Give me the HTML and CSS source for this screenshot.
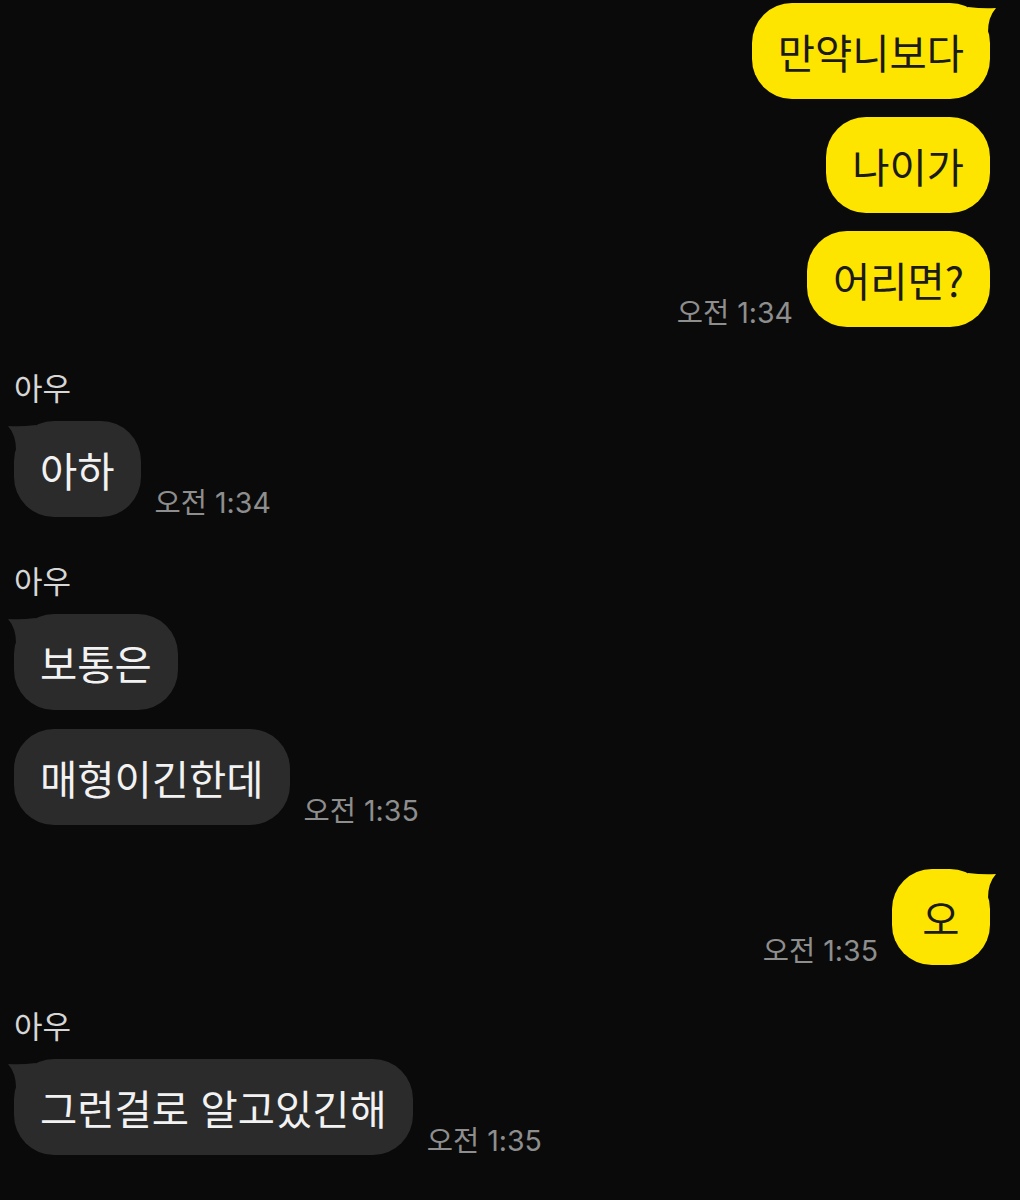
FILE: index.html
```html
<!DOCTYPE html>
<html lang="ko">
<head>
    <meta charset="UTF-8">
    <meta name="viewport" content="width=device-width, initial-scale=1.0">
    <title>채팅</title>
    <link rel="stylesheet" href="styles.css">
</head>
<body>

    <div class="chat">

        <!-- 내 메시지 -->
        <div class="group sent">
            <div class="row">
                <div class="bubble has-tail">
                    만약니보다
                    <svg class="tail" viewBox="0 0 30 30"><path d="M0,3 Q16,5 28,4 Q20,13 20,28 L0,28 Z"/></svg>
                </div>
            </div>
            <div class="row">
                <div class="bubble">나이가</div>
            </div>
            <div class="row">
                <span class="time">오전 1:34</span>
                <div class="bubble">어리면?</div>
            </div>
        </div>

        <div class="group received">
            <div class="name">아우</div>
            <div class="row">
                <div class="bubble has-tail">
                    아하
                    <svg class="tail" viewBox="0 0 30 30"><path d="M30,3 Q14,5 2,4 Q10,13 10,28 L30,28 Z"/></svg>
                </div>
                <span class="time">오전 1:34</span>
            </div>
        </div>

        <div class="group received">
            <div class="name">아우</div>
            <div class="row">
                <div class="bubble has-tail">
                    보통은
                    <svg class="tail" viewBox="0 0 30 30"><path d="M30,3 Q14,5 2,4 Q10,13 10,28 L30,28 Z"/></svg>
                </div>
            </div>
            <div class="row">
                <div class="bubble">매형이긴한데</div>
                <span class="time">오전 1:35</span>
            </div>
        </div>

        <div class="group sent">
            <div class="row">
                <span class="time">오전 1:35</span>
                <div class="bubble has-tail">
                    오
                    <svg class="tail" viewBox="0 0 30 30"><path d="M0,3 Q16,5 28,4 Q20,13 20,28 L0,28 Z"/></svg>
                </div>
            </div>
        </div>

        <div class="group received">
            <div class="name">아우</div>
            <div class="row">
                <div class="bubble has-tail">
                    그런걸로 알고있긴해
                    <svg class="tail" viewBox="0 0 30 30"><path d="M30,3 Q14,5 2,4 Q10,13 10,28 L30,28 Z"/></svg>
                </div>
                <span class="time">오전 1:35</span>
            </div>
        </div>

    </div>

</body>
</html>
```

FILE: styles.css
```css
body {
    margin: 0;
    background-color: #0a0a0a;
    font-family: "Noto Sans CJK KR", "Noto Sans", sans-serif;
}

.chat {
    display: flex;
    flex-direction: column;
    gap: 44px;
    padding: 3px 30px 40px 14px;
}

.group {
    display: flex;
    flex-direction: column;
    gap: 18px;
}

.received {
    gap: 19px;
}

.received + .received {
    margin-top: 3px;
}

.row {
    display: flex;
    align-items: flex-end;
    gap: 14px;
}

.sent .row {
    justify-content: flex-end;
}

.bubble {
    position: relative;
    height: 96px;
    min-width: 98px;
    box-sizing: border-box;
    padding: 0 26px;
    border-radius: 40px;
    display: flex;
    align-items: center;
    justify-content: center;
    font-size: 40.5px;
    white-space: nowrap;
}

.sent .bubble {
    background-color: #fee500;
    color: #1b1b1b;
}

.received .bubble {
    background-color: #2b2b2b;
    color: #f2f2f2;
}

.tail {
    position: absolute;
    top: 1px;
    width: 30px;
    height: 30px;
}

.sent .tail {
    right: -8px;
    fill: #fee500;
}

.received .tail {
    left: -8px;
    fill: #2b2b2b;
}

.time {
    font-family: Inter, "Noto Sans CJK KR", sans-serif;
    font-size: 28.5px;
    color: #8e8e8e;
    line-height: 32px;
    margin-bottom: -2px;
    white-space: nowrap;
}

.name {
    font-size: 31px;
    line-height: 31px;
    color: #d6d6d6;
}
```
